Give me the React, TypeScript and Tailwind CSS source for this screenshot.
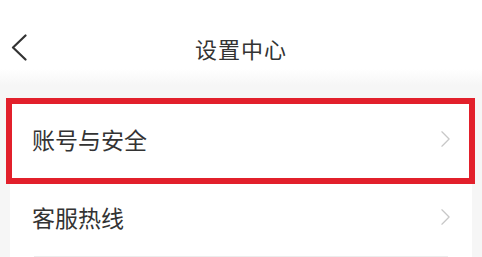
const Chevron = ({ className }: { className?: string }) => (
  <svg viewBox="0 0 10 18" className={className} fill="none">
    <path d="M1 1l8 8-8 8" stroke="currentColor" strokeWidth="1.4" strokeLinecap="round" strokeLinejoin="round" />
  </svg>
);

const rows = ["账号与安全", "客服热线"];

export default function App() {
  return (
    <div
      className="relative w-[482px] h-[257px] overflow-hidden bg-[#f6f6f6] text-[#333]"
      style={{ fontFamily: '"Noto Sans CJK SC", "Noto Sans", sans-serif' }}
    >
      {/* 顶部导航 */}
      <div className="h-[86px] bg-gradient-to-b from-white from-80% to-[#f6f6f6] flex items-center pt-[9px] px-[11px]">
        <svg viewBox="0 0 16 27" className="w-[16px] h-[27px] shrink-0" fill="none">
          <path d="M14.5 1.5L2 13.5l12.5 12" stroke="#333" strokeWidth="2.2" strokeLinecap="round" strokeLinejoin="round" />
        </svg>
        <span className="flex-1 text-center text-[22px] leading-none tracking-[1px] pr-[16px]">设置中心</span>
      </div>

      {/* 列表 */}
      <div className="mx-[10px] mt-[14px] bg-white">
        {rows.map((r) => (
          <div key={r} className="h-[78px] flex items-center justify-between px-[22px]">
            <span className="text-[23px] leading-none">{r}</span>
            <Chevron className="w-[9px] h-[18px] text-[#c8c8c8]" />
          </div>
        ))}
        <div className="mx-[24px] border-t border-[#ececec]" />
      </div>

      {/* 标注框 */}
      <div className="absolute left-[6px] top-[98px] w-[469px] h-[86px] border-[6px] border-[#e2202b]" />
    </div>
  );
}
